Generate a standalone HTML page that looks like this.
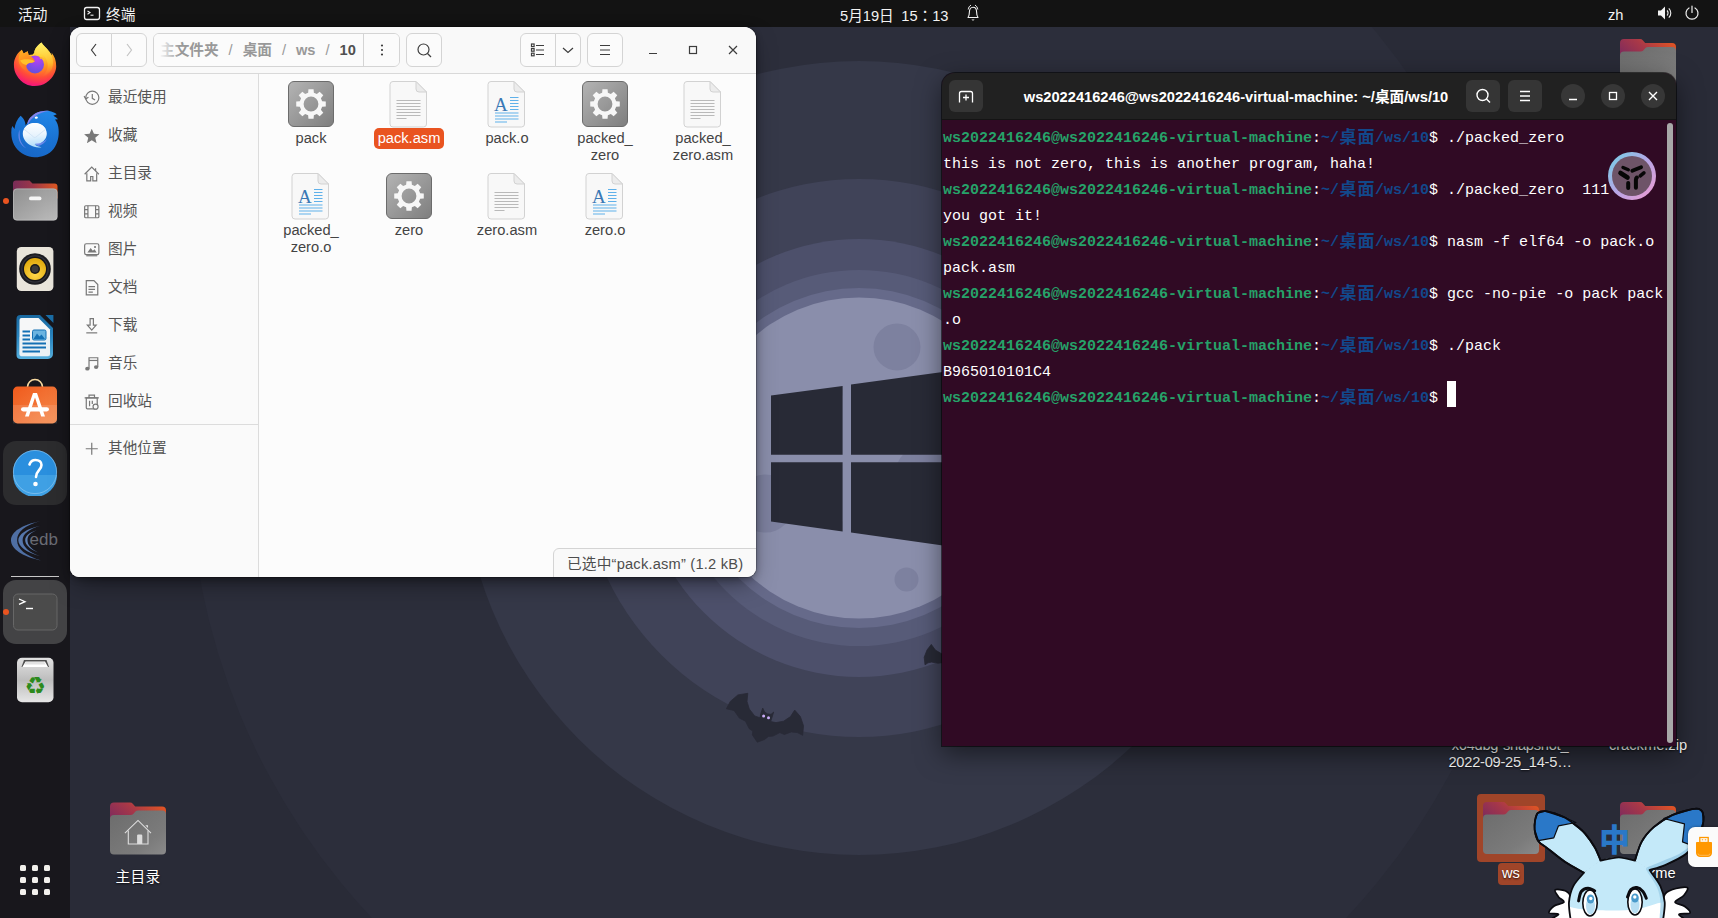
<!DOCTYPE html>
<html lang="zh-CN">
<head>
<meta charset="utf-8">
<title>Ubuntu Desktop</title>
<style>
*{box-sizing:border-box;margin:0;padding:0}
html,body{width:1718px;height:918px;overflow:hidden;background:#2a2c39}
body{font-family:"Liberation Sans","Noto Sans CJK SC",sans-serif;font-size:14.67px;color:#3d3d3d;position:relative}
.abs{position:absolute}
#wall{position:absolute;left:0;top:0;width:1718px;height:918px}
/* top bar */
#topbar{position:absolute;left:0;top:0;width:1718px;height:27px;background:#131313;color:#f2f2f2;font-size:14.67px}
#topbar .t{position:absolute;top:0;height:27px;line-height:30px;white-space:nowrap}
/* dock */
#dock{position:absolute;left:0;top:27px;width:70px;height:891px;background:#18171c}
.dk{position:absolute;left:11px;width:48px;height:48px}
.dkbg{position:absolute;left:3px;width:64px;height:64px;border-radius:13px;background:#2d2c30}
.dot{position:absolute;left:3px;width:6px;height:6px;border-radius:3px;background:#e95420}
/* file manager */
#fm{position:absolute;left:70px;top:27px;width:686px;height:550px;background:#fcfcfc;border-radius:12px 12px 9px 9px;overflow:hidden;box-shadow:0 0 0 1px rgba(0,0,0,.2),0 2px 7px rgba(0,0,0,.3),0 10px 24px -6px rgba(0,0,0,.5)}
#fmhead{position:absolute;left:0;top:0;width:686px;height:47px;background:#f9f9f9;border-bottom:1px solid #d9d9d9}
.btn{position:absolute;top:6px;height:34px;border:1px solid #d4d4d4;border-radius:6px;background:#fbfbfb}
#side{position:absolute;left:0;top:47px;width:189px;height:503px;background:#fafafa;border-right:1px solid #dcdcdc}
.sep{display:inline-block;width:24px;text-align:center;font-weight:normal;color:#999}
.si{position:absolute;left:0;width:188px;height:38px;line-height:38px;padding-left:38px;color:#555;font-size:14.67px;white-space:nowrap}
.si svg{position:absolute;left:13px;top:10.500px;width:17.500px;height:17.500px}
.fi{position:absolute;width:98px;text-align:center;font-size:14.67px;line-height:17px;color:#444}
.fi .ic{position:absolute;left:25px;top:-1px;width:48px;height:48px}
.fi .lb{position:absolute;left:0;top:47px;width:98px;text-align:center}
.fi .lb span{display:inline-block;padding:2px 4px;border-radius:5px}
/* terminal */
#term{position:absolute;left:942px;top:73px;width:734px;height:673px;background:#300a24;border-radius:13px 13px 0 0;overflow:hidden;box-shadow:0 0 0 1px rgba(0,0,0,.55),0 8px 26px rgba(0,0,0,.5)}
#thead{position:absolute;left:-1px;top:0;width:735px;height:47px;background:#212121;border-bottom:1px solid #141414}
#tbody{position:absolute;left:1px;top:53px;width:725px;font-family:"Liberation Mono","Noto Sans CJK SC",monospace;font-size:15px;line-height:26px;color:#fff}
#tbody div{height:26px;white-space:pre}
.g{color:#26a269;font-weight:bold}.b{color:#12488b;font-weight:bold}
.cj{display:inline-block;width:18px;text-align:center;font-family:"Noto Sans CJK SC",sans-serif;font-size:17px;line-height:26px;vertical-align:top;position:relative;top:-3.500px}
.cur{display:inline-block;width:9px;height:26px;background:#fff;vertical-align:top;margin-top:-5px}
.tb{position:absolute;top:7px;width:34px;height:32px;border-radius:6px;background:#353535}
.tc{position:absolute;top:11px;width:24px;height:24px;border-radius:12px;background:#373737}
.dl{position:absolute;color:#fff;font-size:14.67px;line-height:17px;text-align:center;white-space:nowrap;text-shadow:0 1px 2px rgba(0,0,0,.8)}
</style>
</head>
<body>
<!-- WALLPAPER -->
<svg id="wall" viewBox="0 0 1718 918">
<rect width="1718" height="918" fill="#292b37"/>
<circle cx="859" cy="458" r="670" fill="#2c2e3b"/>
<circle cx="859" cy="458" r="397" fill="#353848"/>
<circle cx="859" cy="458" r="279" fill="#404358"/>
<circle cx="859" cy="458" r="219" fill="#4d506b"/>
<circle cx="859" cy="458" r="188" fill="#575b78"/>
<circle cx="859" cy="458" r="170" fill="#666a8a"/>
<circle cx="859" cy="458" r="160.500" fill="#8a8eab"/>
<circle cx="897" cy="347" r="23.500" fill="#7d819f"/>
<circle cx="906.500" cy="579.500" r="12" fill="#7d819f"/>
<circle cx="765" cy="503.600" r="29" fill="#7d819f"/>
<circle cx="925" cy="475" r="30" fill="#7d819f"/>
<g fill="#282a36">
<path d="M771 395.600L842.600 385.900V454.800H771z"/>
<path d="M771 462.200H842.600V531.500L771 521.500z"/>
<path d="M851 384.400L950 371V454.800H851z"/>
<path d="M851 462.200H950V546.500L851 532.600z"/>
</g>
<g fill="#282a36" stroke="#282a36" stroke-width="0.800" stroke-linejoin="round">
<path d="M747.8 693.3 L737.9 694.9 L730.3 701.4 L726.4 708.8 L734.1 710.5 L739.4 718.1 L745.5 721.2 L749.3 728.8 L752.8 731.1 L752.4 734.9 L757.3 742.2 L764.6 739.5 L768.4 736.4 L773.0 736.1 L779.8 732.6 L784.4 734.5 L791.3 731.9 L797.4 732.6 L802.7 735.3 L803.5 725.8 L800.4 716.6 L794.7 710.1 L790.5 716.6 L783.6 721.2 L776.0 722.6 L770.7 721.6 L773.7 712.0 L771.1 714.3 L767.6 713.9 L764.6 712.0 L762.7 708.1 L760.8 713.6 L760.0 717.8 L754.7 715.9 L749.3 709.0 L747.0 701.4Z"/>
<path d="M931.3 644.4 L927.0 650.0 L924.2 657.2 L925.0 664.8 L928.0 662.8 L931.6 662.1 L938.1 663.2 L942.0 662.7 L942.0 654.0 L935.4 650.1Z"/>
</g>
<circle cx="763.600" cy="716.100" r="1.500" fill="#c9abf7"/><circle cx="768.500" cy="717.800" r="1.500" fill="#c9abf7"/>
</svg>

<!-- DESKTOP ICONS -->
<svg class="abs" style="left:110px;top:802px" width="56" height="53" viewBox="0 0 56 52"><defs><linearGradient id="fha" x1="0" y1="0.600" x2="1" y2="0"><stop offset="0" stop-color="#7c2a5e"/><stop offset="0.450" stop-color="#a83848"/><stop offset="1" stop-color="#ec5a1c"/></linearGradient><linearGradient id="fhb" x1="0" y1="0" x2="1" y2="1"><stop offset="0" stop-color="#6c6c6c"/><stop offset="0.700" stop-color="#7b7b7b"/><stop offset="1" stop-color="#8a8a8a"/></linearGradient></defs><path d="M0 4a4 4 0 0 1 4-4h16a4 4 0 0 1 3 1.400l2.200 2.600h26.800a4 4 0 0 1 4 4v20h-56z" fill="url(#fha)"/><path d="M0 16.500a4 4 0 0 1 4-4h16.500a4 4 0 0 0 3-1.300l1.700-1.900a4 4 0 0 1 3-1.300h23.800a4 4 0 0 1 4 4v36a4 4 0 0 1-4 4h-48a4 4 0 0 1-4-4z" fill="url(#fhb)"/><path d="M14.900 30.700l13.100-12.800 13 12.800" fill="none" stroke="#dedede" stroke-width="1.100"/><path d="M18.300 28v13.500h19.700v-13.500" fill="none" stroke="#dedede" stroke-width="1.100"/><path d="M38 28v13.500" stroke="#7a7a7a" stroke-width="0"/><path d="M27.100 41.500v-8.500a1 1 0 0 1 1-1h3a1.200 1.200 0 0 1 1.200 1.200v8.300z" fill="#dcdcdc"/><path d="M35.300 22.800h2.700v2.600z" fill="#dedede"/></svg>
<div class="dl" style="left:88px;top:869px;width:100px;letter-spacing:0.300px">主目录</div>
<svg class="abs" style="left:1620px;top:39px" width="56" height="52" viewBox="0 0 56 52"><defs><linearGradient id="f1a" x1="0" y1="0.600" x2="1" y2="0"><stop offset="0" stop-color="#7c2a5e"/><stop offset="0.450" stop-color="#a83848"/><stop offset="1" stop-color="#ec5a1c"/></linearGradient><linearGradient id="f1b" x1="0" y1="0" x2="1" y2="1"><stop offset="0" stop-color="#6c6c6c"/><stop offset="0.700" stop-color="#7b7b7b"/><stop offset="1" stop-color="#8a8a8a"/></linearGradient></defs><path d="M0 4a4 4 0 0 1 4-4h16a4 4 0 0 1 3 1.400l2.200 2.600h26.800a4 4 0 0 1 4 4v20h-56z" fill="url(#f1a)"/><path d="M0 16.500a4 4 0 0 1 4-4h16.500a4 4 0 0 0 3-1.300l1.700-1.900a4 4 0 0 1 3-1.300h23.800a4 4 0 0 1 4 4v36a4 4 0 0 1-4 4h-48a4 4 0 0 1-4-4z" fill="url(#f1b)"/></svg>
<div class="dl" style="left:1440px;top:737px;width:140px;letter-spacing:-0.250px">x64dbg-snapshot_<br>2022-09-25_14-5…</div>
<div class="dl" style="left:1598px;top:737px;width:100px">crackme.zip</div>
<div class="abs" style="left:1477px;top:794px;width:68px;height:68px;border-radius:4px;background:#a04529"></div>
<svg class="abs" style="left:1483px;top:802px" width="56" height="52" viewBox="0 0 56 52"><defs><linearGradient id="f2a" x1="0" y1="0.600" x2="1" y2="0"><stop offset="0" stop-color="#7c2a5e"/><stop offset="0.450" stop-color="#a83848"/><stop offset="1" stop-color="#ec5a1c"/></linearGradient><linearGradient id="f2b" x1="0" y1="0" x2="1" y2="1"><stop offset="0" stop-color="#6c6c6c"/><stop offset="0.700" stop-color="#7b7b7b"/><stop offset="1" stop-color="#8a8a8a"/></linearGradient></defs><path d="M0 4a4 4 0 0 1 4-4h16a4 4 0 0 1 3 1.400l2.200 2.600h26.800a4 4 0 0 1 4 4v20h-56z" fill="url(#f2a)"/><path d="M0 16.500a4 4 0 0 1 4-4h16.500a4 4 0 0 0 3-1.300l1.700-1.900a4 4 0 0 1 3-1.300h23.800a4 4 0 0 1 4 4v36a4 4 0 0 1-4 4h-48a4 4 0 0 1-4-4z" fill="url(#f2b)"/></svg>
<div class="abs" style="left:1498px;top:863px;width:26px;height:22px;border-radius:4px;background:#a04529"></div>
<div class="dl" style="left:1490px;top:865px;width:42px">ws</div>
<svg class="abs" style="left:1620px;top:802px" width="56" height="52" viewBox="0 0 56 52"><defs><linearGradient id="f3a" x1="0" y1="0.600" x2="1" y2="0"><stop offset="0" stop-color="#7c2a5e"/><stop offset="0.450" stop-color="#a83848"/><stop offset="1" stop-color="#ec5a1c"/></linearGradient><linearGradient id="f3b" x1="0" y1="0" x2="1" y2="1"><stop offset="0" stop-color="#6c6c6c"/><stop offset="0.700" stop-color="#7b7b7b"/><stop offset="1" stop-color="#8a8a8a"/></linearGradient></defs><path d="M0 4a4 4 0 0 1 4-4h16a4 4 0 0 1 3 1.400l2.200 2.600h26.800a4 4 0 0 1 4 4v20h-56z" fill="url(#f3a)"/><path d="M0 16.500a4 4 0 0 1 4-4h16.500a4 4 0 0 0 3-1.300l1.700-1.900a4 4 0 0 1 3-1.300h23.800a4 4 0 0 1 4 4v36a4 4 0 0 1-4 4h-48a4 4 0 0 1-4-4z" fill="url(#f3b)"/></svg>
<div class="dl" style="left:1598px;top:865px;width:100px">crackme</div>

<!-- TOPBAR -->
<div id="topbar">
<div class="t" style="left:18px">活动</div>
<svg class="abs" style="left:83px;top:6px" width="18" height="15" viewBox="0 0 18 15"><rect x="1.500" y="1.500" width="15" height="12" rx="2.200" fill="none" stroke="#f2f2f2" stroke-width="1.300"/><path d="M4.500 5l2.500 1.600-2.500 1.600" fill="none" stroke="#f2f2f2" stroke-width="1.100"/><path d="M7.500 9.200h3" stroke="#f2f2f2" stroke-width="1.100"/></svg>
<div class="t" style="left:106px">终端</div>
<div class="t" style="left:840px;word-spacing:3.500px">5月19日 15<span style="display:inline-block;width:14.500px;text-align:center;word-spacing:0;font-family:'Noto Sans CJK JP',sans-serif">：</span>13</div>
<svg class="abs" style="left:965px;top:3px" width="16" height="19" viewBox="0 0 16 19"><path d="M3 14.500c1.200-1.500 1.400-3 1.400-5.500 0-2.800 1.400-4.800 3.600-4.800s3.600 2 3.600 4.800c0 2.500 0.200 4 1.400 5.500z" fill="none" stroke="#f2f2f2" stroke-width="1.100" stroke-linejoin="round"/><path d="M6.500 16.500a1.600 1.600 0 0 0 3 0z" fill="#f2f2f2"/><path d="M3.200 6.500c0.300-2 1.300-3.600 2.800-4.400M12.800 6.500c-0.300-2-1.300-3.600-2.800-4.400" fill="none" stroke="#f2f2f2" stroke-width="1"/></svg>
<div class="t" style="left:1608px">zh</div>
<svg class="abs" style="left:1657px;top:5px" width="16" height="16" viewBox="0 0 16 16"><path d="M1 5.500h3l4-4v13l-4-4h-3z" fill="#f2f2f2"/><path d="M10 5.500a3.500 3.500 0 0 1 0 5" fill="none" stroke="#f2f2f2" stroke-width="1.100"/><path d="M11.800 3.300a6.500 6.500 0 0 1 0 9.400" fill="none" stroke="#f2f2f2" stroke-width="1.100"/></svg>
<svg class="abs" style="left:1684px;top:5px" width="16" height="16" viewBox="0 0 16 16"><path d="M5 3a6 6 0 1 0 6 0" fill="none" stroke="#f2f2f2" stroke-width="1.200" stroke-linecap="round"/><path d="M8 1v6.500" stroke="#f2f2f2" stroke-width="1.200" stroke-linecap="round"/></svg>
</div>

<!-- DOCK -->
<div id="dock">
<div class="dkbg" style="top:414px;background:#2c2c2e"></div>
<div class="dkbg" style="top:553px;background:#434345"></div>
<div class="dot" style="top:171px"></div>
<div class="dot" style="top:582px"></div>
<div class="abs" style="left:11px;top:549px;width:48px;height:1px;background:#c8c8c8"></div>
<svg class="dk" style="top:13px" viewBox="0 0 48 48"><defs>
<radialGradient id="ffa" cx="0.62" cy="0.08" r="1.02"><stop offset="0" stop-color="#fff565"/><stop offset="0.250" stop-color="#ffcf35"/><stop offset="0.500" stop-color="#ff8e20"/><stop offset="0.720" stop-color="#ff4a3a"/><stop offset="0.880" stop-color="#f81e6e"/><stop offset="1" stop-color="#de0f9c"/></radialGradient>
<radialGradient id="ffb" cx="0.62" cy="0.18" r="0.95"><stop offset="0" stop-color="#c040f0"/><stop offset="0.450" stop-color="#8a4aea"/><stop offset="1" stop-color="#5a52d6"/></radialGradient>
<linearGradient id="ffc" x1="0.2" y1="0" x2="0.6" y2="1"><stop offset="0" stop-color="#ffb11f"/><stop offset="1" stop-color="#ff6a25"/></linearGradient>
<linearGradient id="ffd" x1="0.5" y1="0" x2="0.5" y2="1"><stop offset="0" stop-color="#fff36a"/><stop offset="0.600" stop-color="#ffc12e"/><stop offset="1" stop-color="#ff8a2a" stop-opacity="0"/></linearGradient></defs>
<path d="M30.500 2.400C26.500 5 23.500 9 23.200 12.700L21.700 14.500L17.600 15L16.700 11.200L12.600 13.600L10.800 9.800C8 12 6.500 13.500 5.200 16C3.500 19 2.900 21.500 2.900 24.500C2.900 28.500 3.800 32.500 5.800 35.600C8 39.500 11 42.300 14.600 43.900C17.500 45.300 20.500 45.900 23.500 45.900C28 45.900 32 44.800 35.200 42.700C39 40.300 41.800 37 43.500 33.300C44.700 31 45.200 28.500 45.200 26.200C45.200 23.500 44.800 21 44 18.600C43.200 16.300 42 14.200 40.500 12.400C40.900 13.600 41 14.600 40.800 15.600C40 14.200 39.200 12.800 38.200 11.500C36.800 9.600 35.200 7.900 33.500 6.200C32.300 5 31.300 3.700 30.500 2.400Z" fill="url(#ffa)"/>
<path d="M30.500 2.400C26.500 5 23.500 9 23.200 12.700C27 12 31 13.500 33.500 16.500C36.500 20 37.500 25 36 29.500C35 32.500 33 35 30.500 36.800C35 36 39 33 41 28.500C42.500 25 42.300 20.500 40.800 15.600C40 14.200 39.200 12.800 38.200 11.500C36.800 9.600 35.200 7.900 33.500 6.200C32.300 5 31.300 3.700 30.500 2.400Z" fill="url(#ffd)" opacity="0.850"/>
<circle cx="24" cy="24.500" r="9" fill="url(#ffb)"/>
<path d="M10.800 9.800L12.600 13.600L16.700 11.200L17.600 15C19 15.800 20.500 16.800 21.800 18C22.800 19 23.500 20 23.800 21.200C22.500 22.200 21 22.700 19.500 22.800C17 23 15.500 24.500 15 26.500C14.700 28 15 29.500 15.800 31C13 30 10 27.500 8.500 24C7 20.500 7.500 15 10.800 9.800Z" fill="url(#ffc)"/>
<path d="M9 20.500C11.500 19.300 14.500 19 17.500 19.300C19.800 19.500 22 20 23.800 21.200C22.500 22.200 21 22.700 19.500 22.800C17.500 23 16.200 23.800 15.500 25C13 24.800 10.500 23.200 9 20.500Z" fill="#ffc12a"/>
<path d="M28.500 17.500C30.500 17 32 17.500 33 19C31.500 18.500 30.200 18.500 29 19Z" fill="#ffb52a"/>
</svg>
<svg class="dk" style="top:83px" viewBox="0 0 48 48"><defs>
<linearGradient id="tba" x1="0.75" y1="0" x2="0.3" y2="1"><stop offset="0" stop-color="#2288e8"/><stop offset="0.500" stop-color="#1a73d4"/><stop offset="1" stop-color="#1766c6"/></linearGradient>
<linearGradient id="tbb" x1="0.4" y1="0" x2="0.5" y2="1"><stop offset="0" stop-color="#ffffff"/><stop offset="0.450" stop-color="#eef7fe"/><stop offset="1" stop-color="#aedcfa"/></linearGradient>
<linearGradient id="tbc" x1="0" y1="0" x2="0" y2="1"><stop offset="0" stop-color="#ffffff"/><stop offset="1" stop-color="#e3f1fc"/></linearGradient></defs>
<path d="M16.400 13.100C17 10.500 18.500 8.300 20.500 6.600C23 4 26 2.300 29.400 1.600C32.500 0.800 35.500 0.600 38.200 1C41 1.500 43.500 2.600 45.800 4.200L42.300 5.700C44.200 6.500 45.800 7.700 47 9.200L44 9.500C46.300 12.500 47.500 16 47.600 19.500C47.900 22.800 47.700 26 47 28.900C46.200 32.500 44.900 35.600 42.900 38.400C40.500 41.600 37.300 44 33.500 45.400C30.300 46.700 26.900 47.300 23.500 47.200C20 47.100 16.500 46.300 13.500 44.800C9.800 43 6.800 40.400 4.600 37.200C2.400 34 0.900 30.400 0.500 26.600C0.200 23.800 0.200 21 0.500 18.400L1.400 16L3.500 19C4 13.800 6.200 9.300 9.600 5.700C11.500 7.500 12.800 9 13.500 10.700C14.200 12.200 14.500 13.800 14.600 15.400Z" fill="url(#tba)"/>
<path d="M16.400 13.100C17 10.500 18.500 8.300 20.500 6.600C23 4 26 2.300 29.400 1.600C32.500 0.800 35.500 0.600 38.200 1C33 1.500 28 3.200 24 6.200C21 8.300 18.500 11 17 14.500Z" fill="#8f83ec" opacity="0.900"/>
<path d="M8.500 19.500C7.200 23 7 27 8.200 30.500C9.500 34 12 37 15.500 38.500C11.500 35.500 9 31 8.800 26.500C8.600 24 8.700 21.700 8.500 19.500Z" fill="#7f8ff0" opacity="0.750"/>
<path d="M23.800 13C30.500 13 35.800 17.700 35.800 23.600C35.800 27.500 33.500 31 30 33C28 34.200 25.500 34.800 23.500 34.500C25.500 35.800 28 36.800 30.500 37.200C26.500 38 22.500 37 19 35C14.500 32.500 11.800 28.300 11.800 23.600C11.800 17.700 17.100 13 23.800 13Z" fill="url(#tbb)"/>
<path d="M13 19.200C15 15.500 19 13 23.800 13S32.600 15.500 34.800 19.200L25 27C24.300 27.600 23.300 27.600 22.600 27Z" fill="url(#tbc)"/>
<path d="M13 19.200L22.600 27C23.300 27.600 24.300 27.600 25 27L34.800 19.200" fill="none" stroke="#c9def2" stroke-width="0.700"/>
<path d="M24 33.500C28 34 32.500 32.500 36 29C34 33 30.500 35.300 27 36C26 35.300 25 34.500 24 33.500Z" fill="#7f8ff0" opacity="0.800"/>
<ellipse cx="25.300" cy="7.600" rx="1.600" ry="1.100" fill="#fff" transform="rotate(-15 25.300 7.600)"/>
</svg>
<svg class="dk" style="top:148px" viewBox="0 0 48 48"><defs>
<linearGradient id="fla" x1="0" y1="0" x2="1" y2="0"><stop offset="0" stop-color="#782c58"/><stop offset="0.450" stop-color="#9c3648"/><stop offset="1" stop-color="#e25a22"/></linearGradient>
<linearGradient id="flb" x1="0" y1="0" x2="1" y2="1"><stop offset="0" stop-color="#8f8f8f"/><stop offset="0.600" stop-color="#a9a9a9"/><stop offset="1" stop-color="#bdbdbd"/></linearGradient></defs>
<path d="M2 8.500a3 3 0 0 1 3-3h13.500l3 3h22a3 3 0 0 1 3 3v12h-44.500z" fill="url(#fla)"/>
<rect x="2" y="13.500" width="44.500" height="32" rx="4" fill="url(#flb)"/>
<rect x="2.500" y="14" width="43.500" height="31" rx="3.500" fill="none" stroke="#c9c9c9" stroke-width="0.800" opacity="0.600"/>
<rect x="18" y="21.500" width="12.500" height="3.800" rx="1.900" fill="#f5f5f5"/>
</svg>
<svg class="dk" style="top:218px" viewBox="0 0 48 48"><defs>
<radialGradient id="rba" cx="0.5" cy="0.75" r="0.7"><stop offset="0" stop-color="#ffd84a"/><stop offset="1" stop-color="#e0a90c"/></radialGradient></defs>
<rect x="5.800" y="2" width="36.600" height="44" rx="4.500" fill="#e9e5db"/>
<circle cx="24" cy="24" r="15.800" fill="#1c1c20"/><circle cx="24" cy="24" r="13.800" fill="#33333b"/><circle cx="24" cy="24" r="12.500" fill="#15151a"/>
<circle cx="24" cy="24" r="11" fill="url(#rba)"/>
<circle cx="24" cy="24" r="5" fill="#1a1a1a"/><circle cx="24" cy="24" r="3.500" fill="#3a3a3a"/>
</svg>
<svg class="dk" style="top:286px" viewBox="0 0 48 48"><defs>
<linearGradient id="wra" x1="0" y1="0" x2="0" y2="1"><stop offset="0" stop-color="#18689f"/><stop offset="0.500" stop-color="#2a86c0"/><stop offset="1" stop-color="#56b0de"/></linearGradient></defs>
<path d="M9.500 2h19.500l13 13v26a5 5 0 0 1-5 5h-27.500a4 4 0 0 1-4-4v-36a4 4 0 0 1 4-4z" fill="url(#wra)"/>
<path d="M33 1.500h10v10z" fill="#1a6da6" stroke="#18171c" stroke-width="1.200"/>
<path d="M10.500 5h17l11.500 11.500v24a2.500 2.500 0 0 1-2.500 2.500h-26a2 2 0 0 1-2-2v-34a2 2 0 0 1 2-2z" fill="#f6f7f8"/>
<path d="M8.500 24h30.500v17a2.500 2.500 0 0 1-2.500 2.500h-26a2 2 0 0 1-2-2z" fill="#e4eef5" opacity="0.600"/>
<path d="M11.500 18.500h7.500M11.500 22.500h7.500M11.500 26.500h7.500M11.500 30.500h23.500M11.500 34.500h23.500M11.500 38.500h17.500" stroke="#1470b4" stroke-width="1.800"/>
<rect x="21.500" y="17" width="13.500" height="10" rx="1.500" fill="#6ab3e0" stroke="#1470b4" stroke-width="1"/>
<path d="M22.500 26l3.500-5.500 2.500 3 2-2 3.500 4.500z" fill="#1470b4"/>
</svg>
<svg class="dk" style="top:351px" viewBox="0 0 48 48"><defs>
<linearGradient id="swa" x1="0" y1="0" x2="1" y2="1"><stop offset="0" stop-color="#f05a1c"/><stop offset="1" stop-color="#f58a4c"/></linearGradient></defs>
<path d="M16.500 12v-3a7.500 7.500 0 0 1 15 0v3" fill="none" stroke="#f7d9a0" stroke-width="1.600"/>
<rect x="2" y="8.600" width="44" height="36.800" rx="4.500" fill="url(#swa)"/>
<rect x="2" y="27" width="44" height="18.400" fill="#fff" opacity="0.120"/>
<path d="M14 38.500l8-23.500h4l8 23.500h-3.800l-6.200-19-6.200 19z" fill="#fff"/>
<rect x="10" y="29.200" width="28" height="4.200" rx="2.100" fill="#fff"/>
</svg>
<svg class="dk" style="top:421px" viewBox="0 0 48 48">
<circle cx="24" cy="24" r="22" fill="#2a8fde"/><path d="M2 27h44a22 22 0 0 1-44 0z" fill="#3fa0e4"/>
<circle cx="24" cy="24" r="21.600" fill="none" stroke="#9fd0f4" stroke-width="0.800" opacity="0.700"/>
<path d="M18.500 16.500c1-3 3-4.500 6-4.500 3.500 0 6 2 6 5 0 5-5.500 5.500-5.500 12" fill="none" stroke="#fff" stroke-width="2.600" stroke-linecap="round"/><circle cx="24.500" cy="36" r="2.300" fill="#fff"/>
</svg>
<svg class="dk" style="top:490px;left:8px;width:54px" viewBox="0 0 54 48">
<path d="M32 4.200c-18 3.500-29 10.500-29 19s11.500 16.500 30.200 20.200c-15.500-4.500-24.100-11.500-24.100-20.200s8-15 22.900-19z" fill="#4f6fa3"/>
<path d="M32.400 8.700c-14 3-22.100 8.500-22.100 14.500s8.100 12.500 22.100 16c-11.500-4-17.800-9.500-17.800-16s6.300-11 17.800-14.500z" fill="#5576aa"/>
<path d="M28.600 13.300c-7.500 2.300-11.400 5.700-11.400 9.900s4 8.700 12.900 12.200c-7-3.500-10.600-7.500-10.600-12.200s3.100-7.400 9.100-9.900z" fill="#6081b3"/>
<text x="21.500" y="27.500" font-family="Liberation Sans,sans-serif" font-size="17" fill="#6a6c74">edb</text>
</svg>
<svg class="dk" style="top:561px" viewBox="0 0 48 48">
<rect x="2.500" y="6" width="43.500" height="36" rx="4.500" fill="#4b4b4b" stroke="#676767" stroke-width="1"/>
<path d="M8 11l6 2.700-6 2.700" fill="none" stroke="#fff" stroke-width="1.300"/><path d="M15 20.500h7" stroke="#fff" stroke-width="1.400"/>
</svg>
<svg class="dk" style="top:629px" viewBox="0 0 48 48"><defs>
<linearGradient id="tra" x1="0" y1="0" x2="0" y2="1"><stop offset="0" stop-color="#e2e2e2"/><stop offset="0.500" stop-color="#bdbdbd"/><stop offset="1" stop-color="#e6e6e6"/></linearGradient></defs>
<rect x="6" y="1.800" width="36.500" height="44.500" rx="5" fill="url(#tra)"/>
<path d="M10.500 11l2.500-7h22.500l2.500 7z" fill="#4e4e4e"/>
<path d="M11.500 11l3-5.500h19.500l3 5.500z" fill="#fff"/><path d="M13.500 8.500l1.200-2.500h18.600l1.200 2.500z" fill="#e2e2e2"/><path d="M11.500 11l1-1.500h23l1 1.500z" fill="#fff"/>
<text x="24.200" y="38.200" text-anchor="middle" font-family="DejaVu Sans,sans-serif" font-size="24" fill="#2c8a1c">♻</text>
</svg>
<svg class="abs" style="left:19px;top:837px" width="32" height="32" viewBox="0 0 32 32"><rect x="1" y="1" width="6" height="6" rx="1.500" fill="#f2f0ec"/><rect x="13" y="1" width="6" height="6" rx="1.500" fill="#f2f0ec"/><rect x="25" y="1" width="6" height="6" rx="1.500" fill="#f2f0ec"/><rect x="1" y="13" width="6" height="6" rx="1.500" fill="#f2f0ec"/><rect x="13" y="13" width="6" height="6" rx="1.500" fill="#f2f0ec"/><rect x="25" y="13" width="6" height="6" rx="1.500" fill="#f2f0ec"/><rect x="1" y="25" width="6" height="6" rx="1.500" fill="#f2f0ec"/><rect x="13" y="25" width="6" height="6" rx="1.500" fill="#f2f0ec"/><rect x="25" y="25" width="6" height="6" rx="1.500" fill="#f2f0ec"/></svg>
</div>

<!-- FILE MANAGER -->
<div id="fm">
<div id="fmhead">
<div class="btn" style="left:6px;width:36px;border-radius:6px 0 0 6px"><svg width="34" height="32" viewBox="0 0 34 32"><path d="M19 10l-4.5 6 4.5 6" stroke="#3d3d3d" fill="none" stroke-width="1.2"/></svg></div>
<div class="btn" style="left:41px;width:36px;border-radius:0 6px 6px 0"><svg width="34" height="32" viewBox="0 0 34 32"><path d="M15 10l4.5 6-4.5 6" stroke="#c4c4c4" fill="none" stroke-width="1.2"/></svg></div>
<div class="btn" id="pathbar" style="left:83px;width:247px;overflow:hidden">
<div class="abs" style="left:6px;top:0;height:32px;line-height:32px;white-space:nowrap;font-weight:bold;color:#999;font-size:14.67px"><span>主文件夹</span><span class="sep">/</span>桌面<span class="sep">/</span>ws<span class="sep">/</span><span style="color:#505050">10</span></div>
<div class="abs" style="left:0;top:0;width:26px;height:32px;background:linear-gradient(90deg,#fbfbfb 20%,rgba(251,251,251,0))"></div>
<div class="abs" style="left:209px;top:0;width:37px;height:32px;border-left:1px solid #d4d4d4;background:#fbfbfb"><svg width="36" height="32" viewBox="0 0 36 32"><circle cx="18" cy="11.5" r="1.1" fill="#3d3d3d"/><circle cx="18" cy="16" r="1.1" fill="#3d3d3d"/><circle cx="18" cy="20.5" r="1.1" fill="#3d3d3d"/></svg></div>
</div>
<div class="btn" style="left:336px;width:36px"><svg width="34" height="32" viewBox="0 0 34 32"><circle cx="16.5" cy="15.5" r="5.5" stroke="#3d3d3d" fill="none" stroke-width="1.2"/><path d="M20.5 19.5l3.5 3.5" stroke="#3d3d3d" fill="none" stroke-width="1.2"/></svg></div>
<div class="btn" style="left:450px;width:36px;border-radius:6px 0 0 6px"><svg width="34" height="32" viewBox="0 0 34 32"><path d="M15 11.5h8M15 16h8M15 20.5h8" stroke="#3d3d3d" fill="none" stroke-width="1.2"/><rect x="10.5" y="10" width="2.6" height="2.6" stroke="#3d3d3d" fill="none" stroke-width="1.2" stroke-width="1"/><rect x="10.5" y="14.6" width="2.6" height="2.6" stroke="#3d3d3d" fill="none" stroke-width="1.2" stroke-width="1"/><rect x="10.5" y="19.2" width="2.6" height="2.6" stroke="#3d3d3d" fill="none" stroke-width="1.2" stroke-width="1"/></svg></div>
<div class="btn" style="left:485px;width:26px;border-radius:0 6px 6px 0"><svg width="24" height="32" viewBox="0 0 24 32"><path d="M7 14l5 4.5 5-4.5" stroke="#3d3d3d" fill="none" stroke-width="1.2"/></svg></div>
<div class="btn" style="left:517px;width:36px"><svg width="34" height="32" viewBox="0 0 34 32"><path d="M12 11.5h10M12 16h10M12 20.5h10" stroke="#3d3d3d" fill="none" stroke-width="1.2"/></svg></div>
<svg class="abs" style="left:573px;top:13px" width="20" height="20" viewBox="0 0 20 20"><path d="M6 13.5h8" stroke="#3d3d3d" fill="none" stroke-width="1.2"/></svg>
<svg class="abs" style="left:613px;top:13px" width="20" height="20" viewBox="0 0 20 20"><rect x="6.5" y="6.5" width="7" height="7" stroke="#3d3d3d" fill="none" stroke-width="1.2"/></svg>
<svg class="abs" style="left:653px;top:13px" width="20" height="20" viewBox="0 0 20 20"><path d="M6 6l8 8M14 6l-8 8" stroke="#3d3d3d" fill="none" stroke-width="1.2"/></svg>
</div>
<div id="side">
<div class="si" style="top:4px"><svg viewBox="0 0 16 16"><circle cx="8.5" cy="8" r="6" stroke="#787878" fill="none" stroke-width="1.1"/><path d="M8.5 4.5v4l2.5 1.5" stroke="#787878" fill="none" stroke-width="1.1"/><path d="M1 6.5l1.5 2.5 2.5-1.5" stroke="#787878" fill="none" stroke-width="1.1"/></svg>最近使用</div>
<div class="si" style="top:42px"><svg viewBox="0 0 16 16"><path d="M8 1.5l2 4.6 5 .5-3.800 3.300 1.200 4.900-4.400-2.700-4.400 2.700 1.200-4.900-3.800-3.300 5-.5z" fill="#787878"/></svg>收藏</div>
<div class="si" style="top:80px"><svg viewBox="0 0 16 16"><path d="M1.500 8.500l6.500-6.500 6.500 6.500" stroke="#787878" fill="none" stroke-width="1.1"/><path d="M3.500 7.500v7h3.500v-4h2v4h3.500v-7" stroke="#787878" fill="none" stroke-width="1.1"/><path d="M11.500 3v2.500" stroke="#787878" fill="none" stroke-width="1.1"/></svg>主目录</div>
<div class="si" style="top:118px"><svg viewBox="0 0 16 16"><rect x="1.500" y="2.500" width="13" height="11" rx="1" stroke="#787878" fill="none" stroke-width="1.1"/><path d="M4.500 2.500v11M11.500 2.500v11M1.500 6h3M1.500 10h3M11.500 6h3M11.500 10h3" stroke="#787878" fill="none" stroke-width="1.1"/></svg>视频</div>
<div class="si" style="top:156px"><svg viewBox="0 0 16 16"><rect x="1.500" y="2.500" width="13" height="10" rx="1.500" stroke="#787878" fill="none" stroke-width="1.1"/><path d="M3 13.500h10" stroke="#787878" fill="none" stroke-width="1.1"/><path d="M4 10.500l3-4 2 2.500 1.500-1.500 2 3z" fill="#787878"/><circle cx="11" cy="5.500" r="1" fill="#787878"/></svg>图片</div>
<div class="si" style="top:194px"><svg viewBox="0 0 16 16"><path d="M3 1.500h7l3.500 3.500v9.500h-10.500z" stroke="#787878" fill="none" stroke-width="1.1"/><path d="M5 7h6M5 9.500h6M5 12h4" stroke="#787878" fill="none" stroke-width="1.1"/></svg>文档</div>
<div class="si" style="top:232px"><svg viewBox="0 0 16 16"><path d="M6.500 1.500h3v6h2.500l-4 4.500-4-4.500h2.500z" stroke="#787878" fill="none" stroke-width="1.1"/><path d="M3 14.500h10" stroke="#787878" fill="none" stroke-width="1.1"/></svg>下载</div>
<div class="si" style="top:270px"><svg viewBox="0 0 16 16"><path d="M5.500 12.500v-10h8v8.500" stroke="#787878" fill="none" stroke-width="1.1"/><path d="M5.500 5h8" stroke="#787878" fill="none" stroke-width="1.1"/><ellipse cx="4" cy="12.500" rx="2" ry="1.700" fill="#787878"/><ellipse cx="12" cy="11" rx="2" ry="1.700" fill="#787878"/></svg>音乐</div>
<div class="si" style="top:308px"><svg viewBox="0 0 16 16"><path d="M3 4.500h10v9a1 1 0 0 1-1 1h-8a1 1 0 0 1-1-1z" stroke="#787878" fill="none" stroke-width="1.1"/><path d="M1.500 4.500h13M5.500 4v-2h5v2M6 7v5M8.500 7v3" stroke="#787878" fill="none" stroke-width="1.1"/><circle cx="11.500" cy="12.500" r="2.300" fill="#fafafa" stroke="#787878" fill="none" stroke-width="1.1"/></svg>回收站</div>
<div class="abs" style="left:0;top:350px;width:188px;height:1px;background:#dcdcdc"></div>
<div class="si" style="top:355px"><svg viewBox="0 0 16 16"><path d="M8 2.500v11M2.500 8h11" stroke="#787878" fill="none" stroke-width="1.1"/></svg>其他位置</div>
</div>
<div id="grid">
<div class="fi" style="left:192px;top:54px"><svg class="ic" viewBox="0 0 48 48"><defs><linearGradient id="gx1" x1="0" y1="0" x2="1" y2="1"><stop offset="0" stop-color="#b4b4b4"/><stop offset="1" stop-color="#7e7e7e"/></linearGradient></defs><rect x="1.500" y="1.500" width="45" height="45" rx="5.500" fill="url(#gx1)" stroke="#6c6c6c" stroke-width="1"/><path d="M35.14 21.14 L38.78 21.42 L38.78 26.58 L35.14 26.86 L33.90 29.85 L36.27 32.63 L32.63 36.27 L29.85 33.90 L26.86 35.14 L26.58 38.78 L21.42 38.78 L21.14 35.14 L18.15 33.90 L15.37 36.27 L11.73 32.63 L14.10 29.85 L12.86 26.86 L9.22 26.58 L9.22 21.42 L12.86 21.14 L14.10 18.15 L11.73 15.37 L15.37 11.73 L18.15 14.10 L21.14 12.86 L21.42 9.22 L26.58 9.22 L26.86 12.86 L29.85 14.10 L32.63 11.73 L36.27 15.37 L33.90 18.15Z M16.60 24.00 a7.40 7.40 0 1 0 14.80 0 a7.40 7.40 0 1 0 -14.80 0Z" fill="#f7f7f7" fill-rule="evenodd"/></svg><div class="lb"><span>pack</span></div></div>
<div class="fi" style="left:290px;top:54px"><svg class="ic" viewBox="0 0 48 48"><path d="M8 1.500h23l10.500 10.500v32a3 3 0 0 1-3 3h-30.500a3 3 0 0 1-3-3v-39.500a3 3 0 0 1 3-3z" fill="#f8f8f8" stroke="#d2d2d2" stroke-width="1"/><path d="M31 1.500v7.500a3 3 0 0 0 3 3h7.500z" fill="#ececec" stroke="#d2d2d2" stroke-width="1" stroke-linejoin="round"/><path d="M11.500 20.500h24M11.500 23.500h24M11.500 26.500h24M11.500 29.500h24M11.500 32.500h24M11.500 35.500h24M11.500 38.500h10" stroke="#b9b9b9" stroke-width="1"/></svg><div class="lb"><span style="background:#e95420;color:#fff">pack.asm</span></div></div>
<div class="fi" style="left:388px;top:54px"><svg class="ic" viewBox="0 0 48 48"><path d="M8 1.500h23l10.500 10.500v32a3 3 0 0 1-3 3h-30.500a3 3 0 0 1-3-3v-39.500a3 3 0 0 1 3-3z" fill="#f8f8f8" stroke="#d2d2d2" stroke-width="1"/><path d="M31 1.500v7.500a3 3 0 0 0 3 3h7.500z" fill="#ececec" stroke="#d2d2d2" stroke-width="1" stroke-linejoin="round"/><text x="11" y="30.500" font-family="Liberation Serif,serif" font-size="19" fill="#3a78b5">A</text><path d="M27 17.500h8.500M27 20.500h8.500M27 23.500h8.500M27 26.500h8.500M27 29.500h8.500M12 33h23.500M12 36h23.500M12 39h23.500M12 42h12" stroke="#5fb1ea" stroke-width="1"/></svg><div class="lb"><span>pack.o</span></div></div>
<div class="fi" style="left:486px;top:54px"><svg class="ic" viewBox="0 0 48 48"><defs><linearGradient id="gx2" x1="0" y1="0" x2="1" y2="1"><stop offset="0" stop-color="#b4b4b4"/><stop offset="1" stop-color="#7e7e7e"/></linearGradient></defs><rect x="1.500" y="1.500" width="45" height="45" rx="5.500" fill="url(#gx2)" stroke="#6c6c6c" stroke-width="1"/><path d="M35.14 21.14 L38.78 21.42 L38.78 26.58 L35.14 26.86 L33.90 29.85 L36.27 32.63 L32.63 36.27 L29.85 33.90 L26.86 35.14 L26.58 38.78 L21.42 38.78 L21.14 35.14 L18.15 33.90 L15.37 36.27 L11.73 32.63 L14.10 29.85 L12.86 26.86 L9.22 26.58 L9.22 21.42 L12.86 21.14 L14.10 18.15 L11.73 15.37 L15.37 11.73 L18.15 14.10 L21.14 12.86 L21.42 9.22 L26.58 9.22 L26.86 12.86 L29.85 14.10 L32.63 11.73 L36.27 15.37 L33.90 18.15Z M16.60 24.00 a7.40 7.40 0 1 0 14.80 0 a7.40 7.40 0 1 0 -14.80 0Z" fill="#f7f7f7" fill-rule="evenodd"/></svg><div class="lb"><span>packed_<br>zero</span></div></div>
<div class="fi" style="left:584px;top:54px"><svg class="ic" viewBox="0 0 48 48"><path d="M8 1.500h23l10.500 10.500v32a3 3 0 0 1-3 3h-30.500a3 3 0 0 1-3-3v-39.500a3 3 0 0 1 3-3z" fill="#f8f8f8" stroke="#d2d2d2" stroke-width="1"/><path d="M31 1.500v7.500a3 3 0 0 0 3 3h7.500z" fill="#ececec" stroke="#d2d2d2" stroke-width="1" stroke-linejoin="round"/><path d="M11.500 20.500h24M11.500 23.500h24M11.500 26.500h24M11.500 29.500h24M11.500 32.500h24M11.500 35.500h24M11.500 38.500h10" stroke="#b9b9b9" stroke-width="1"/></svg><div class="lb"><span>packed_<br>zero.asm</span></div></div>
<div class="fi" style="left:192px;top:146px"><svg class="ic" viewBox="0 0 48 48"><path d="M8 1.500h23l10.500 10.500v32a3 3 0 0 1-3 3h-30.500a3 3 0 0 1-3-3v-39.500a3 3 0 0 1 3-3z" fill="#f8f8f8" stroke="#d2d2d2" stroke-width="1"/><path d="M31 1.500v7.500a3 3 0 0 0 3 3h7.500z" fill="#ececec" stroke="#d2d2d2" stroke-width="1" stroke-linejoin="round"/><text x="11" y="30.500" font-family="Liberation Serif,serif" font-size="19" fill="#3a78b5">A</text><path d="M27 17.500h8.500M27 20.500h8.500M27 23.500h8.500M27 26.500h8.500M27 29.500h8.500M12 33h23.500M12 36h23.500M12 39h23.500M12 42h12" stroke="#5fb1ea" stroke-width="1"/></svg><div class="lb"><span>packed_<br>zero.o</span></div></div>
<div class="fi" style="left:290px;top:146px"><svg class="ic" viewBox="0 0 48 48"><defs><linearGradient id="gx3" x1="0" y1="0" x2="1" y2="1"><stop offset="0" stop-color="#b4b4b4"/><stop offset="1" stop-color="#7e7e7e"/></linearGradient></defs><rect x="1.500" y="1.500" width="45" height="45" rx="5.500" fill="url(#gx3)" stroke="#6c6c6c" stroke-width="1"/><path d="M35.14 21.14 L38.78 21.42 L38.78 26.58 L35.14 26.86 L33.90 29.85 L36.27 32.63 L32.63 36.27 L29.85 33.90 L26.86 35.14 L26.58 38.78 L21.42 38.78 L21.14 35.14 L18.15 33.90 L15.37 36.27 L11.73 32.63 L14.10 29.85 L12.86 26.86 L9.22 26.58 L9.22 21.42 L12.86 21.14 L14.10 18.15 L11.73 15.37 L15.37 11.73 L18.15 14.10 L21.14 12.86 L21.42 9.22 L26.58 9.22 L26.86 12.86 L29.85 14.10 L32.63 11.73 L36.27 15.37 L33.90 18.15Z M16.60 24.00 a7.40 7.40 0 1 0 14.80 0 a7.40 7.40 0 1 0 -14.80 0Z" fill="#f7f7f7" fill-rule="evenodd"/></svg><div class="lb"><span>zero</span></div></div>
<div class="fi" style="left:388px;top:146px"><svg class="ic" viewBox="0 0 48 48"><path d="M8 1.500h23l10.500 10.500v32a3 3 0 0 1-3 3h-30.500a3 3 0 0 1-3-3v-39.500a3 3 0 0 1 3-3z" fill="#f8f8f8" stroke="#d2d2d2" stroke-width="1"/><path d="M31 1.500v7.500a3 3 0 0 0 3 3h7.500z" fill="#ececec" stroke="#d2d2d2" stroke-width="1" stroke-linejoin="round"/><path d="M11.500 20.500h24M11.500 23.500h24M11.500 26.500h24M11.500 29.500h24M11.500 32.500h24M11.500 35.500h24M11.500 38.500h10" stroke="#b9b9b9" stroke-width="1"/></svg><div class="lb"><span>zero.asm</span></div></div>
<div class="fi" style="left:486px;top:146px"><svg class="ic" viewBox="0 0 48 48"><path d="M8 1.500h23l10.500 10.500v32a3 3 0 0 1-3 3h-30.500a3 3 0 0 1-3-3v-39.500a3 3 0 0 1 3-3z" fill="#f8f8f8" stroke="#d2d2d2" stroke-width="1"/><path d="M31 1.500v7.500a3 3 0 0 0 3 3h7.500z" fill="#ececec" stroke="#d2d2d2" stroke-width="1" stroke-linejoin="round"/><text x="11" y="30.500" font-family="Liberation Serif,serif" font-size="19" fill="#3a78b5">A</text><path d="M27 17.500h8.500M27 20.500h8.500M27 23.500h8.500M27 26.500h8.500M27 29.500h8.500M12 33h23.500M12 36h23.500M12 39h23.500M12 42h12" stroke="#5fb1ea" stroke-width="1"/></svg><div class="lb"><span>zero.o</span></div></div>
</div>
<div class="abs" id="status" style="left:483px;top:521px;width:204px;height:30px;border:1px solid #d4d4d4;border-radius:6px 0 0 0;background:#f9f9f9;line-height:30px;padding-left:13px;font-size:14.67px;letter-spacing:0.200px;color:#4d4d4d;white-space:nowrap">已选中“pack.asm” (1.2 kB)</div>
</div>

<!-- TERMINAL -->
<div id="term">
<div id="thead">
<div class="tb" style="left:8px"><svg width="34" height="32" viewBox="0 0 34 32"><path d="M10.5 22.5v-9a2 2 0 0 1 2-2h9a2 2 0 0 1 2 2v9" fill="none" stroke="#fff" stroke-width="1.3"/><path d="M17 14.5v6M14 17.5h6" stroke="#fff" stroke-width="1.3"/></svg></div>
<div class="abs" style="left:60px;top:0;width:470px;height:47px;line-height:48px;text-align:center;color:#fff;font-weight:bold;font-size:14.67px;white-space:nowrap">ws2022416246@ws2022416246-virtual-machine: ~/桌面/ws/10</div>
<div class="tb" style="left:525px"><svg width="34" height="32" viewBox="0 0 34 32"><circle cx="16.5" cy="15" r="5.5" fill="none" stroke="#fff" stroke-width="1.4"/><path d="M20.5 19l3.5 3.5" stroke="#fff" stroke-width="1.4"/></svg></div>
<div class="tb" style="left:567px"><svg width="34" height="32" viewBox="0 0 34 32"><path d="M12 11.5h10M12 16h10M12 20.5h10" stroke="#fff" stroke-width="1.3"/></svg></div>
<div class="tc" style="left:620px"><svg width="24" height="24" viewBox="0 0 24 24"><path d="M8 15.5h8" stroke="#fff" stroke-width="1.3"/></svg></div>
<div class="tc" style="left:660px"><svg width="24" height="24" viewBox="0 0 24 24"><rect x="8.5" y="8.5" width="7" height="7" fill="none" stroke="#fff" stroke-width="1.3"/></svg></div>
<div class="tc" style="left:700px"><svg width="24" height="24" viewBox="0 0 24 24"><path d="M8 8l8 8M16 8l-8 8" stroke="#fff" stroke-width="1.4"/></svg></div>
</div>
<div id="tbody">
<div><span class="g">ws2022416246@ws2022416246-virtual-machine</span>:<span class="b">~/<span class="cj">桌</span><span class="cj">面</span>/ws/10</span>$ ./packed_zero</div>
<div>this is not zero, this is another program, haha!</div>
<div><span class="g">ws2022416246@ws2022416246-virtual-machine</span>:<span class="b">~/<span class="cj">桌</span><span class="cj">面</span>/ws/10</span>$ ./packed_zero  111</div>
<div>you got it!</div>
<div><span class="g">ws2022416246@ws2022416246-virtual-machine</span>:<span class="b">~/<span class="cj">桌</span><span class="cj">面</span>/ws/10</span>$ nasm -f elf64 -o pack.o</div>
<div>pack.asm</div>
<div><span class="g">ws2022416246@ws2022416246-virtual-machine</span>:<span class="b">~/<span class="cj">桌</span><span class="cj">面</span>/ws/10</span>$ gcc -no-pie -o pack pack</div>
<div>.o</div>
<div><span class="g">ws2022416246@ws2022416246-virtual-machine</span>:<span class="b">~/<span class="cj">桌</span><span class="cj">面</span>/ws/10</span>$ ./pack</div>
<div>B965010101C4</div>
<div><span class="g">ws2022416246@ws2022416246-virtual-machine</span>:<span class="b">~/<span class="cj">桌</span><span class="cj">面</span>/ws/10</span>$ <span class="cur"></span></div>
</div>
<div class="abs" style="left:725px;top:50px;width:6px;height:620px;border-radius:3px;background:#a8a8a8"></div>
</div>
<!-- OVERLAYS -->
<div class="abs" style="left:1598px;top:818px;width:33px;height:40px;line-height:40px;font-family:'Noto Sans CJK SC',sans-serif;font-weight:900;font-size:30.500px;color:#2a78c8;text-align:center">中</div>
<svg class="abs" style="left:1525px;top:795px" width="193" height="123" viewBox="1525 795 193 123">
<g stroke="#0b0b10" stroke-width="1.800" stroke-linejoin="round">
<path d="M1570.6 896.9 C1569.6 892.1 1567.8 892.0 1565.2 890.8 C1562.6 889.6 1556.3 888.9 1555.2 889.9 C1554.1 890.9 1557.0 894.8 1558.5 896.9 C1560.0 899.0 1564.7 900.7 1563.9 902.2 C1563.1 903.8 1556.3 904.4 1553.8 906.2 C1551.3 908.0 1548.3 911.5 1549.1 912.9 C1549.9 914.2 1558.0 913.2 1558.5 914.3 C1559.0 915.4 1549.7 918.7 1551.8 919.6 C1553.9 920.5 1568.1 923.4 1571.2 919.6 C1574.3 915.8 1571.6 901.7 1570.6 896.9Z" fill="#fff"/><path d="M1663.7 896.9 C1665.2 891.9 1668.5 891.1 1672.4 889.5 C1676.3 887.9 1685.3 886.5 1687.2 887.5 C1689.1 888.5 1685.8 893.0 1683.8 895.5 C1681.8 898.0 1675.0 900.4 1675.1 902.2 C1675.2 904.0 1682.0 904.4 1684.5 906.2 C1687.0 908.0 1690.8 911.5 1689.9 912.9 C1689.0 914.2 1680.2 913.2 1679.1 914.3 C1678.0 915.4 1685.9 918.7 1683.2 919.6 C1680.5 920.5 1666.3 923.4 1663.1 919.6 C1659.8 915.8 1662.2 901.9 1663.7 896.9Z" fill="#fff"/>
<path d="M1584 872.7 C1580.9 870.9 1571.2 866.0 1565.2 862 C1559.2 858.0 1552.3 852.1 1547.8 848.6 C1543.3 845.1 1540.6 844.3 1538.4 841.2 C1536.2 838.1 1535.2 833.2 1534.7 829.8 C1534.2 826.3 1534.6 823.3 1535.1 820.5 C1535.6 817.7 1536.0 814.7 1537.7 813.1 C1539.4 811.5 1542.1 811.0 1545.1 811.1 C1548.1 811.2 1552.4 812.7 1555.8 813.8 C1559.2 814.9 1561.6 815.7 1565.2 817.8 C1568.8 819.9 1574.0 823.8 1577.3 826.5 C1580.6 829.2 1582.4 830.4 1585.3 833.9 C1588.2 837.4 1592.1 842.8 1594.7 847.3 C1597.3 851.8 1599.7 858.5 1600.7 860.7" fill="#c4e9f9"/>
<path d="M1634.9 860.7 C1636.0 857.6 1638.5 847.5 1641.6 841.9 C1644.7 836.3 1648.6 831.7 1653.7 827.2 C1658.8 822.7 1665.9 818.1 1672.4 815.1 C1678.9 812.1 1688.0 810.1 1692.5 809.1 C1697.0 808.1 1697.5 808.6 1699.2 809.1 C1700.9 809.6 1701.9 810.3 1702.6 812.4 C1703.3 814.5 1704.1 817.3 1703.3 821.8 C1702.5 826.3 1700.8 833.8 1697.9 839.2 C1695.0 844.6 1691.2 849.8 1685.8 854 C1680.4 858.2 1671.7 862.0 1665.7 864.7 C1659.7 867.4 1652.3 869.2 1649.6 870.1" fill="#c4e9f9"/>
</g>
<path d="M1649.6 870.1 C1652.8 869.6 1659.7 867.4 1665.7 864.7 C1671.7 862.0 1680.4 858.2 1685.8 854 C1691.2 849.8 1697.0 840.7 1697.9 839.2 C1698.8 837.8 1694.3 842.8 1691.2 845.3 C1688.1 847.8 1683.8 851.4 1679.1 854 C1674.4 856.6 1668.6 858.4 1663.1 860.7 C1657.6 863.0 1648.5 866.4 1646.3 868 C1644.0 869.6 1646.4 870.6 1649.6 870.1Z" fill="#9fcfe9"/>
<g stroke="#0b0b10" stroke-width="1.200" stroke-linejoin="round">
<path d="M1537.7 813.1 L1545.1 811.1 L1565.2 817.8 L1575.9 822.5 L1558.5 825.8 L1553.8 837.9 L1538.4 840.6 L1534.7 829.8 L1535.1 820.5Z" fill="#2a78c8"/>
<path d="M1663.7 818.5 L1672.4 815.1 L1692.5 809.1 L1699.2 809.1 L1702.6 812.4 L1703.3 821.8 L1697.9 839.2 L1691.2 845.3 L1682.5 841.9 L1684.5 823.8Z" fill="#2a78c8"/>
</g>
<path d="M1584 872.7 C1580.9 870.9 1571.2 866.0 1565.2 862 C1559.2 858.0 1552.3 852.1 1547.8 848.6 C1543.3 845.1 1540.6 844.3 1538.4 841.2 C1536.2 838.1 1535.2 833.2 1534.7 829.8 C1534.2 826.3 1534.6 823.3 1535.1 820.5 C1535.6 817.7 1536.0 814.7 1537.7 813.1 C1539.4 811.5 1542.1 811.0 1545.1 811.1 C1548.1 811.2 1552.4 812.7 1555.8 813.8 C1559.2 814.9 1561.6 815.7 1565.2 817.8 C1568.8 819.9 1574.0 823.8 1577.3 826.5 C1580.6 829.2 1582.4 830.4 1585.3 833.9 C1588.2 837.4 1592.1 842.8 1594.7 847.3 C1597.3 851.8 1599.7 858.5 1600.7 860.7" fill="none" stroke="#0b0b10" stroke-width="1.800"/>
<path d="M1634.9 860.7 C1636.0 857.6 1638.5 847.5 1641.6 841.9 C1644.7 836.3 1648.6 831.7 1653.7 827.2 C1658.8 822.7 1665.9 818.1 1672.4 815.1 C1678.9 812.1 1688.0 810.1 1692.5 809.1 C1697.0 808.1 1697.5 808.6 1699.2 809.1 C1700.9 809.6 1701.9 810.3 1702.6 812.4 C1703.3 814.5 1704.1 817.3 1703.3 821.8 C1702.5 826.3 1700.8 833.8 1697.9 839.2 C1695.0 844.6 1691.2 849.8 1685.8 854 C1680.4 858.2 1671.7 862.0 1665.7 864.7 C1659.7 867.4 1652.3 869.2 1649.6 870.1" fill="none" stroke="#0b0b10" stroke-width="1.800"/>
<path d="M1570.6 919.6 C1570.3 916.7 1568.5 907.8 1569 902.2 C1569.5 896.6 1570.8 891.0 1573.3 886.1 C1575.8 881.2 1579.4 876.9 1584 872.7 C1588.6 868.5 1594.9 863.3 1600.7 860.7 C1606.5 858.1 1613.1 857.3 1618.8 857.3 C1624.5 857.3 1629.8 858.6 1634.9 860.7 C1640.0 862.8 1645.3 865.9 1649.6 870.1 C1653.8 874.3 1657.9 880.8 1660.4 886.1 C1662.9 891.5 1664.2 896.6 1664.7 902.2 C1665.2 907.8 1663.4 916.7 1663.1 919.6" fill="#c4e9f9"/>
<path d="M1569.9 906.9 C1572.5 907.4 1578.3 909.0 1585.3 909.6 C1592.3 910.2 1603.2 910.6 1612.1 910.5 C1621.0 910.4 1630.2 910.2 1638.9 908.9 C1647.6 907.6 1660.3 901.1 1664.4 902.9 C1668.5 904.7 1679.5 916.8 1663.7 919.6 C1648.0 922.4 1585.5 919.6 1569.9 919.6Z" fill="#fff"/>
<path d="M1646.3 870.1 C1647.5 873.0 1654.7 882.1 1657 887.5 C1659.3 892.9 1660.0 896.9 1660.4 902.2 C1660.9 907.6 1659.2 916.7 1659.7 919.6 C1660.2 922.5 1662.9 922.5 1663.7 919.6 C1664.5 916.7 1665.2 907.8 1664.7 902.2 C1664.2 896.6 1662.9 891.5 1660.4 886.1 C1657.9 880.8 1651.9 872.8 1649.6 870.1 C1647.2 867.4 1645.1 867.2 1646.3 870.1Z" fill="#9fcfe9" opacity="0.800"/>
<g fill="none" stroke="#0b0b10" stroke-width="1.800" stroke-linecap="round"><path d="M1570.6 919.6 C1570.3 916.7 1568.5 907.8 1569 902.2 C1569.5 896.6 1570.8 891.0 1573.3 886.1 C1575.8 881.2 1582.2 874.9 1584 872.7"/><path d="M1600.7 860.7 C1603.7 860.1 1613.1 857.3 1618.8 857.3 C1624.5 857.3 1632.2 860.1 1634.9 860.7"/><path d="M1649.6 870.1 C1651.4 872.8 1657.9 880.8 1660.4 886.1 C1662.9 891.5 1664.2 896.6 1664.7 902.2 C1665.2 907.8 1663.4 916.7 1663.1 919.6"/></g>
<g stroke="#0b0b10" stroke-width="1.600">
<ellipse cx="1590" cy="903" rx="7.200" ry="13" fill="#fff"/><ellipse cx="1635" cy="902" rx="7.200" ry="13" fill="#fff"/>
</g>
<path d="M1578.6 900.9 C1579.0 899.3 1579.7 893.6 1581.3 891.5 C1582.9 889.4 1585.8 888.3 1588 888.2 C1590.2 888.1 1593.6 890.4 1594.7 890.8" fill="none" stroke="#0b0b10" stroke-width="3" stroke-linecap="round"/>
<path d="M1627.5 896.9 C1628.1 895.7 1629.3 891.1 1630.9 889.5 C1632.5 887.9 1634.9 887.2 1636.9 887.5 C1638.9 887.8 1641.3 889.7 1642.9 891.5 C1644.5 893.3 1645.7 897.1 1646.3 898.2" fill="none" stroke="#0b0b10" stroke-width="3" stroke-linecap="round"/>
<ellipse cx="1590.500" cy="906" rx="4.500" ry="8.500" fill="#b7def3"/><ellipse cx="1635" cy="905" rx="4.500" ry="8.500" fill="#b7def3"/>
<ellipse cx="1590.500" cy="899" rx="3.800" ry="4.500" fill="#4a9acb"/><ellipse cx="1635" cy="898" rx="3.800" ry="4.500" fill="#4a9acb"/>
<circle cx="1590.800" cy="898.500" r="1.700" fill="#fff"/><circle cx="1634.800" cy="897" r="1.700" fill="#fff"/>
</svg>
<div class="abs" style="left:1688px;top:827px;width:36px;height:40px;border-radius:7px;background:#fbfbfb;box-shadow:0 0 3px rgba(0,0,0,.4)"></div>
<svg class="abs" style="left:1694px;top:835px" width="20" height="24" viewBox="0 0 20 24"><rect x="5.800" y="2.500" width="8.400" height="5" fill="none" stroke="#ff9800" stroke-width="1.300"/><path d="M7.800 4.800h1.400M10.800 4.800h1.400" stroke="#ff9800" stroke-width="1"/><path d="M2.500 7.500h15v10.500a3.500 3.500 0 0 1-3.500 3.500h-8a3.500 3.500 0 0 1-3.500-3.500z" fill="#ff9800" stroke="#ff9800" stroke-width="1"/><path d="M4 18.500a2 2 0 0 0 2 1.800h8a2 2 0 0 0 2-1.800" fill="none" stroke="#ffc266" stroke-width="0.800"/></svg>
<svg class="abs" style="left:1607px;top:151px" width="50" height="50" viewBox="0 0 50 50"><defs><linearGradient id="cra" x1="0" y1="0" x2="1" y2="1"><stop offset="0" stop-color="#6fd3e6"/><stop offset="0.500" stop-color="#b7a6e6"/><stop offset="1" stop-color="#f29ad0"/></linearGradient></defs><circle cx="25" cy="25" r="24" fill="url(#cra)"/><circle cx="25" cy="25" r="20" fill="#6e5468"/>
<g fill="none" stroke="#060606" stroke-linecap="round"><path d="M16 16.500l5.300 2.300" stroke-width="3.400"/><path d="M25.300 19.800l8.800-3.600" stroke-width="3.800"/><path d="M13.500 22l7 4.500" stroke-width="4.600"/><path d="M21.200 32v5" stroke-width="4"/><path d="M28.900 36.800v-8c0-1.200 0.300-1.800 1-2.300" stroke-width="4"/><path d="M33.300 24.800l3.600-3" stroke-width="3.600"/></g>
</svg>
</body>
</html>
